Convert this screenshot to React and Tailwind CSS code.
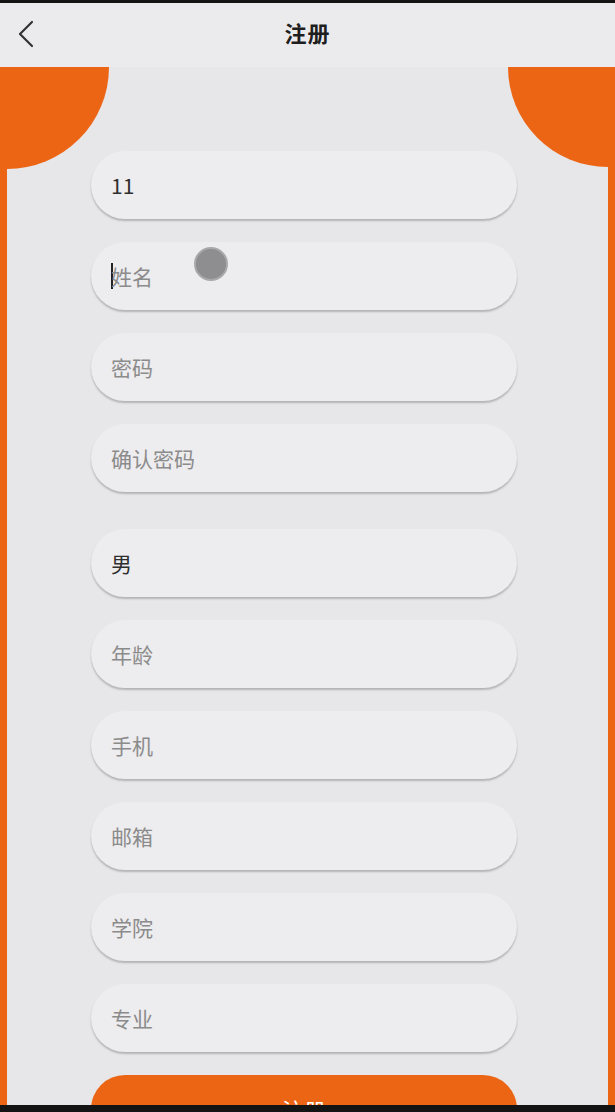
import React from 'react';

const fields = [
    { label: '11', value: true },
    { label: '姓名', caret: true },
    { label: '密码' },
    { label: '确认密码' },
    { label: '男', value: true, select: true },
    { label: '年龄' },
    { label: '手机' },
    { label: '邮箱' },
    { label: '学院' },
    { label: '专业' },
];

function Field({ label, value, caret, select }) {
    return (
        <div
            className={`w-[426px] h-[68px] shrink-0 rounded-full bg-[#edecee] shadow-[0_2px_2px_rgba(0,0,0,0.22)] flex items-center pl-[20px] ${select ? 'mt-[14px]' : ''}`}
        >
            {caret && <span className="w-[2px] h-[26px] bg-[#222] -mr-[2px]"></span>}
            <span className={`text-[21px] leading-none ${value ? 'text-[#2e2e2e]' : 'text-[#8b8b8b]'}`}>
                {label}
            </span>
        </div>
    );
}

export default function App() {
    return (
        <div
            className="w-[615px] h-[1112px] bg-[#111] flex flex-col overflow-hidden"
            style={{ fontFamily: '"Noto Sans CJK SC", "Noto Sans", sans-serif' }}
        >
            <div className="h-[3px] shrink-0 bg-[#141414]"></div>

            {/* Header */}
            <div className="h-[64px] shrink-0 bg-[#ebeaec] relative flex items-center justify-center pb-[6px]">
                <svg className="absolute left-[16px] top-[17px]" width="20" height="28" viewBox="0 0 20 28" fill="none">
                    <polyline points="16,2 4,14 16,26" stroke="#333" strokeWidth="2.2" strokeLinecap="round" strokeLinejoin="round" />
                </svg>
                <h1 className="text-[22px] leading-none font-bold text-[#1e1e1e] tracking-[1px]">注册</h1>
            </div>

            {/* Body */}
            <div className="flex-1 min-h-0 bg-[#ec6515] px-[7px]">
                <div className="h-full bg-[#e7e6e8] relative overflow-hidden">
                    <div className="absolute -left-[102px] -top-[102px] w-[204px] h-[204px] rounded-full bg-[#ec6515]"></div>
                    <div className="absolute -right-[100px] -top-[100px] w-[200px] h-[200px] rounded-full bg-[#ec6515]"></div>

                    <div className="relative flex flex-col items-center pt-[84px] gap-[23px] pr-[7px]">
                        {fields.map((f) => (
                            <Field key={f.label} {...f} />
                        ))}
                        <button className="w-[426px] h-[68px] shrink-0 rounded-full bg-[#ec6515] text-white text-[22px] flex items-center justify-center">
                            注册
                        </button>
                    </div>

                    {/* touch indicator */}
                    <div className="absolute left-[187px] top-[180px] w-[34px] h-[34px] rounded-full bg-[#8e8d8f] border-[2px] border-[#a9a8aa]"></div>
                </div>
            </div>

            <div className="h-[7px] shrink-0 bg-[#141414]"></div>
        </div>
    );
}
